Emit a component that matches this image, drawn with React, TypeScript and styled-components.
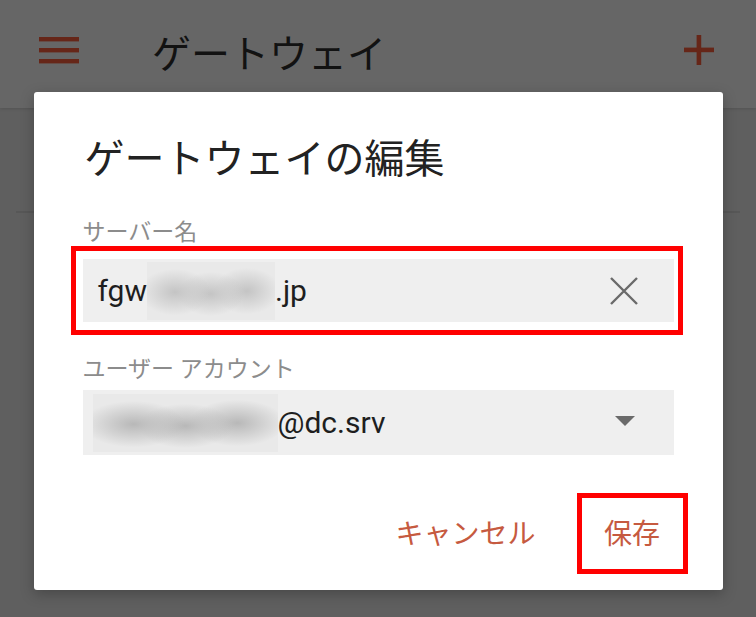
import React from 'react';
import styled, { createGlobalStyle } from 'styled-components';

const GlobalStyle = createGlobalStyle`
  html, body {
    margin: 0;
    padding: 0;
    background: #5f5f5f;
  }
  body {
    font-family: Roboto, "Noto Sans CJK JP", sans-serif;
  }
`;

const Screen = styled.div`
  width: 756px;
  height: 617px;
  position: relative;
  overflow: hidden;
  background: #5f5f5f;
`;

const AppBar = styled.header`
  height: 108px;
  display: flex;
  align-items: center;
  padding: 0 42px 8px 39px;
  box-sizing: border-box;
  background: #666666;
  box-shadow: 0 1px 3px rgba(0, 0, 0, 0.12);
`;

const AppTitle = styled.h1`
  flex: 1;
  margin: 10px 0 0 73px;
  font-size: 39px;
  font-weight: 400;
  line-height: 1;
  color: #121212;
`;

const ListDivider = styled.div`
  margin: 103px 16px 0 16px;
  height: 2px;
  background: #575757;
`;

const Overlay = styled.div`
  position: absolute;
  inset: 0;
  display: flex;
  justify-content: center;
  align-items: flex-start;
  padding-top: 92px;
`;

const Dialog = styled.section`
  width: 689px;
  box-sizing: border-box;
  background: #ffffff;
  border-radius: 3px;
  padding: 40px 49px 16px 49px;
  display: flex;
  flex-direction: column;
  box-shadow: 0 4px 14px rgba(0, 0, 0, 0.25);
`;

const DialogTitle = styled.h2`
  margin: 0 0 32px 2px;
  font-size: 40px;
  font-weight: 400;
  line-height: 56px;
  color: #222222;
`;

const FieldLabel = styled.div<{ $gap: number }>`
  font-size: 23px;
  line-height: 26px;
  color: #8c8c8c;
  margin-bottom: ${({ $gap }) => $gap}px;
`;

const Highlight = styled.div`
  border: 5px solid #ff0000;
  margin: 0 -9px 0 -12px;
  padding: 8px 4px 8px 7px;
`;

const Field = styled.div<{ $height: number }>`
  height: ${({ $height }) => $height}px;
  background: #efefef;
  display: flex;
  align-items: center;
  padding: 0 35px 0 15px;
  box-sizing: border-box;
`;

const FieldValue = styled.div<{ $shift?: number }>`
  flex: 1;
  display: flex;
  align-items: center;
  font-size: 30px;
  color: #1e1e1e;
  line-height: 1;
  margin-left: ${({ $shift }) => $shift ?? 0}px;
`;

const Blurred = styled.span<{ $w: number; $tone: string }>`
  display: inline-block;
  width: ${({ $w }) => $w}px;
  height: 58px;
  background:
    radial-gradient(ellipse 28% 40% at 22% 52%, ${({ $tone }) => $tone} 0%, transparent 100%),
    radial-gradient(ellipse 26% 38% at 50% 55%, ${({ $tone }) => $tone} 0%, transparent 100%),
    radial-gradient(ellipse 26% 40% at 78% 50%, ${({ $tone }) => $tone} 0%, transparent 100%),
    #e9e9e9;
`;

const SecondField = styled.div`
  margin-top: 22px;
  display: flex;
  flex-direction: column;
`;

const Caret = styled.span`
  width: 0;
  height: 0;
  border-left: 10.5px solid transparent;
  border-right: 10.5px solid transparent;
  border-top: 10px solid #6a6a6a;
  margin: 0 4px 4px 0;
`;

const Actions = styled.div`
  margin-top: 38px;
  margin-right: -14px;
  display: flex;
  justify-content: flex-end;
  align-items: center;
`;

const TextButton = styled.button<{ $marked?: boolean }>`
  font-family: Roboto, "Noto Sans CJK JP", sans-serif;
  font-size: 28px;
  color: #c65a40;
  background: transparent;
  border: ${({ $marked }) => ($marked ? '5px solid #ff0000' : '5px solid transparent')};
  height: 81px;
  width: ${({ $marked }) => ($marked ? '111px' : 'auto')};
  padding: 0 ${({ $marked }) => ($marked ? 0 : 14)}px 4px;
  margin-left: ${({ $marked }) => ($marked ? 22 : 0)}px;
  cursor: pointer;
`;

const MenuIcon = () => (
  <svg width="40" height="27" viewBox="0 0 40 27">
    <rect x="0" y="0" width="40" height="4.4" fill="#662618" />
    <rect x="0" y="11" width="40" height="4.4" fill="#662618" />
    <rect x="0" y="22" width="40" height="4.4" fill="#662618" />
  </svg>
);

const PlusIcon = () => (
  <svg width="30" height="30" viewBox="0 0 30 30">
    <rect x="0" y="12.6" width="30" height="4.6" fill="#662618" />
    <rect x="12.6" y="0" width="4.6" height="30" fill="#662618" />
  </svg>
);

const ClearIcon = () => (
  <svg width="30" height="30" viewBox="0 0 30 30">
    <path d="M2 2 L28 28 M28 2 L2 28" stroke="#6a6a6a" strokeWidth="2.4" fill="none" />
  </svg>
);

const App: React.FC = () => {
  return (
    <>
      <GlobalStyle />
      <Screen>
        <AppBar>
          <MenuIcon />
          <AppTitle>ゲートウェイ</AppTitle>
          <PlusIcon />
        </AppBar>
        <ListDivider />
        <Overlay>
          <Dialog>
            <DialogTitle>ゲートウェイの編集</DialogTitle>
            <FieldLabel $gap={0}>サーバー名</FieldLabel>
            <Highlight>
              <Field $height={63}>
                <FieldValue>
                  fgw
                  <Blurred $w={128} $tone="#c4c4c4" />
                  .jp
                </FieldValue>
                <ClearIcon />
              </Field>
            </Highlight>
            <SecondField>
              <FieldLabel $gap={7}>ユーザー アカウント</FieldLabel>
              <Field $height={65}>
                <FieldValue $shift={-5}>
                  <Blurred $w={185} $tone="#b8b8b8" />
                  @dc.srv
                </FieldValue>
                <Caret />
              </Field>
            </SecondField>
            <Actions>
              <TextButton>キャンセル</TextButton>
              <TextButton $marked>保存</TextButton>
            </Actions>
          </Dialog>
        </Overlay>
      </Screen>
    </>
  );
};

export default App;
